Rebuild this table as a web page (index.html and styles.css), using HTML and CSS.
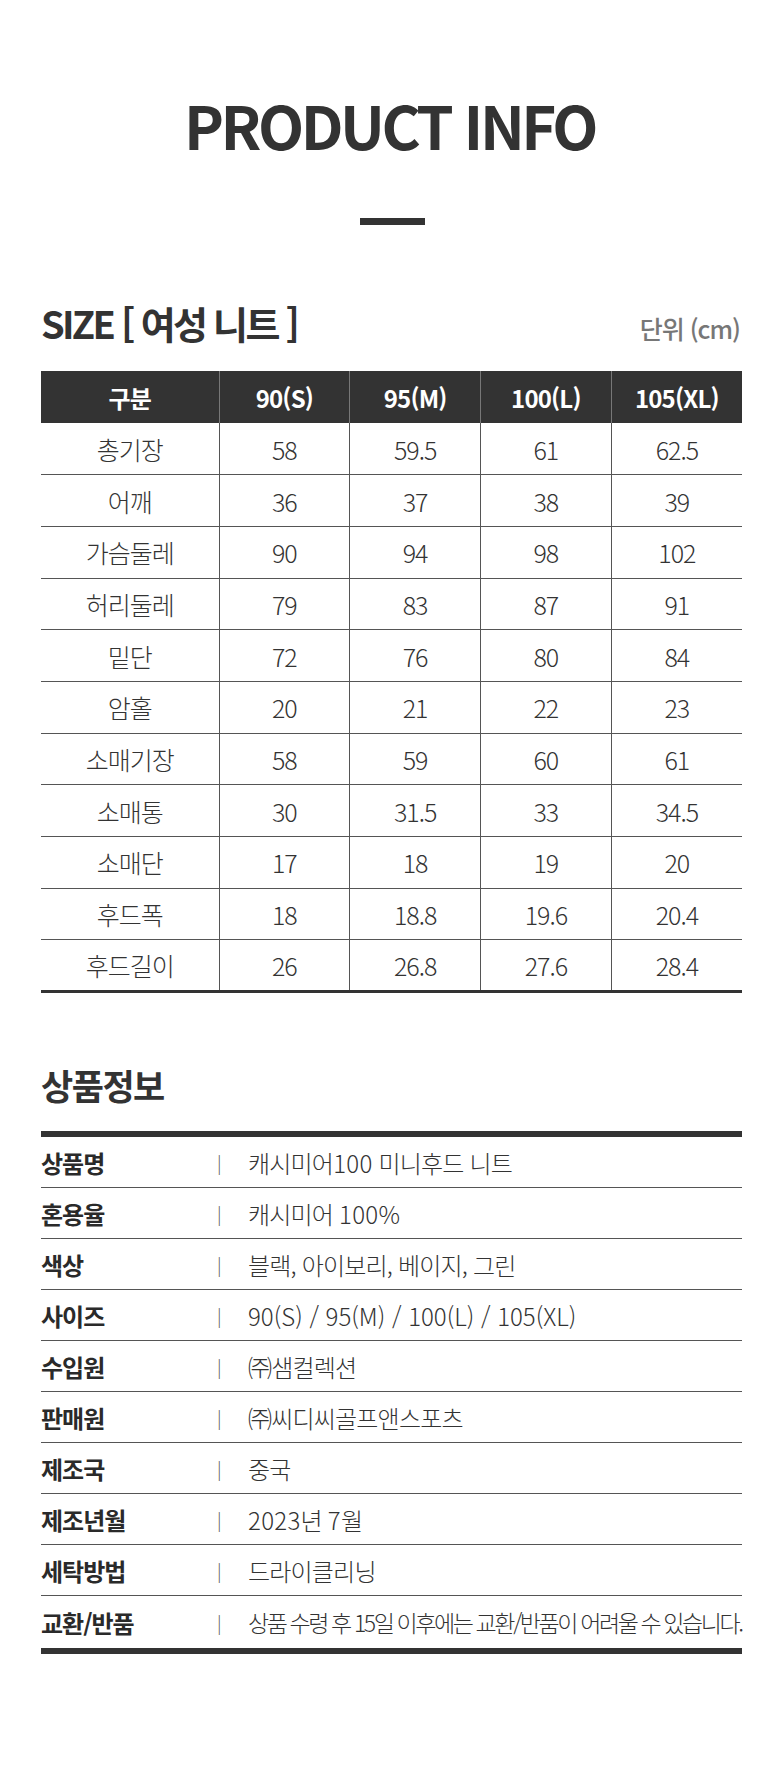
FILE: index.html
```html
<!DOCTYPE html>
<html lang="ko">
<head>
<meta charset="utf-8">
<title>PRODUCT INFO</title>
<link rel="stylesheet" href="styles.css">
</head>
<body>
<main class="page">
  <header class="hero">
    <h1 class="hero-title">PRODUCT INFO</h1>
    <div class="hero-dash"></div>
  </header>

  <section class="size">
    <div class="size-head">
      <h2 class="size-title">SIZE [ 여성 니트 ]</h2>
      <span class="size-unit">단위 (cm)</span>
    </div>
    <table class="size-table">
      <thead>
        <tr><th>구분</th><th>90(S)</th><th>95(M)</th><th>100(L)</th><th>105(XL)</th></tr>
      </thead>
      <tbody>
        <tr><td>총기장</td><td>58</td><td>59.5</td><td>61</td><td>62.5</td></tr>
        <tr><td>어깨</td><td>36</td><td>37</td><td>38</td><td>39</td></tr>
        <tr><td>가슴둘레</td><td>90</td><td>94</td><td>98</td><td>102</td></tr>
        <tr><td>허리둘레</td><td>79</td><td>83</td><td>87</td><td>91</td></tr>
        <tr><td>밑단</td><td>72</td><td>76</td><td>80</td><td>84</td></tr>
        <tr><td>암홀</td><td>20</td><td>21</td><td>22</td><td>23</td></tr>
        <tr><td>소매기장</td><td>58</td><td>59</td><td>60</td><td>61</td></tr>
        <tr><td>소매통</td><td>30</td><td>31.5</td><td>33</td><td>34.5</td></tr>
        <tr><td>소매단</td><td>17</td><td>18</td><td>19</td><td>20</td></tr>
        <tr><td>후드폭</td><td>18</td><td>18.8</td><td>19.6</td><td>20.4</td></tr>
        <tr><td>후드길이</td><td>26</td><td>26.8</td><td>27.6</td><td>28.4</td></tr>
      </tbody>
    </table>
  </section>

  <section class="info">
    <h2 class="info-title">상품정보</h2>
    <dl class="info-list">
      <div class="info-row"><dt>상품명</dt><dd><span class="sep">|</span>캐시미어<span class="lat">100</span> 미니후드 니트</dd></div>
      <div class="info-row"><dt>혼용율</dt><dd><span class="sep">|</span>캐시미어 <span class="lat">100%</span></dd></div>
      <div class="info-row"><dt>색상</dt><dd><span class="sep">|</span>블랙, 아이보리, 베이지, 그린</dd></div>
      <div class="info-row"><dt>사이즈</dt><dd><span class="sep">|</span><span class="lat wide">90(S) / 95(M) / 100(L) / 105(XL)</span></dd></div>
      <div class="info-row"><dt>수입원</dt><dd><span class="sep">|</span>㈜샘컬렉션</dd></div>
      <div class="info-row"><dt>판매원</dt><dd><span class="sep">|</span>㈜씨디씨골프앤스포츠</dd></div>
      <div class="info-row"><dt>제조국</dt><dd><span class="sep">|</span>중국</dd></div>
      <div class="info-row"><dt>제조년월</dt><dd><span class="sep">|</span><span class="lat">2023</span>년 <span class="lat">7</span>월</dd></div>
      <div class="info-row"><dt>세탁방법</dt><dd><span class="sep">|</span>드라이클리닝</dd></div>
      <div class="info-row"><dt>교환/반품</dt><dd><span class="sep">|</span><span class="long">상품 수령 후 15일 이후에는 교환/반품이 어려울 수 있습니다.</span></dd></div>
    </dl>
  </section>
</main>
</body>
</html>
```

FILE: styles.css
```css
* { box-sizing: border-box; }

html, body {
  margin: 0;
  padding: 0;
  background: #fff;
}

body {
  font-family: "Noto Sans CJK KR", "Noto Sans", sans-serif;
  color: #333;
}

.page {
  width: 780px;
  padding: 94px 38px 120px 41px;
}

/* hero */
.hero {
  display: flex;
  flex-direction: column;
  align-items: center;
}

.hero-title {
  margin: 0;
  font-size: 60px;
  line-height: 60px;
  font-weight: 700;
  letter-spacing: -3.5px;
  color: #333;
  padding-right: 4px;
}

.hero-dash {
  width: 65px;
  height: 7px;
  margin-top: 64px;
  margin-left: 2px;
  background: #333;
}

/* size */
.size {
  margin-top: 79px;
}

.size-head {
  display: flex;
  justify-content: space-between;
  align-items: baseline;
  padding-right: 2px;
}

.size-title {
  margin: 0;
  font-size: 38px;
  line-height: 38px;
  font-weight: 700;
  letter-spacing: -2.7px;
  color: #333;
}

.size-unit {
  font-size: 25px;
  font-weight: 500;
  color: #777;
  letter-spacing: -1px;
}

.size-table {
  width: 701px;
  margin-top: 25px;
  border-collapse: collapse;
  table-layout: fixed;
}

.size-table th,
.size-table td {
  padding: 0;
  text-align: center;
  border-left: 1px solid #555;
}

.size-table th:first-child,
.size-table td:first-child {
  width: 178px;
  border-left: 0;
}

.size-table th {
  height: 52px;
  background: #333;
  color: #fff;
  font-size: 24px;
  font-weight: 700;
  letter-spacing: -0.8px;
  border-left-color: #777;
}

.size-table td {
  height: 51.7px;
  font-size: 25px;
  font-weight: 300;
  letter-spacing: -1px;
  color: #333;
  border-bottom: 1px solid #555;
}

.size-table tbody tr:last-child td {
  border-bottom: 3px solid #333;
}

/* info */
.info {
  margin-top: 74px;
}

.info-title {
  margin: 0;
  font-size: 35px;
  line-height: 35px;
  font-weight: 700;
  letter-spacing: -1.5px;
  color: #333;
}

.info-list {
  margin: 29px 0 0;
  border-top: 6px solid #333;
  border-bottom: 6px solid #333;
}

.info-row {
  display: grid;
  grid-template-columns: 176px 1fr;
  align-items: center;
  height: 51px;
  border-bottom: 1px solid #555;
}

.info-row:last-child {
  border-bottom: 0;
  height: 52px;
}

.info-row dt {
  font-size: 24px;
  font-weight: 700;
  letter-spacing: -1px;
  color: #2a2a2a;
}

.info-row dd {
  margin: 0;
  display: flex;
  align-items: center;
  font-size: 24px;
  font-weight: 300;
  letter-spacing: -0.8px;
  color: #333;
  white-space: pre;
}

.lat {
  letter-spacing: 0.3px;
}

.lat.wide {
  letter-spacing: 0px;
}

.sep {
  width: 31px;
  font-size: 18px;
  color: #555;
}

.long {
  font-size: 23px;
  letter-spacing: -2.4px;
}
```
